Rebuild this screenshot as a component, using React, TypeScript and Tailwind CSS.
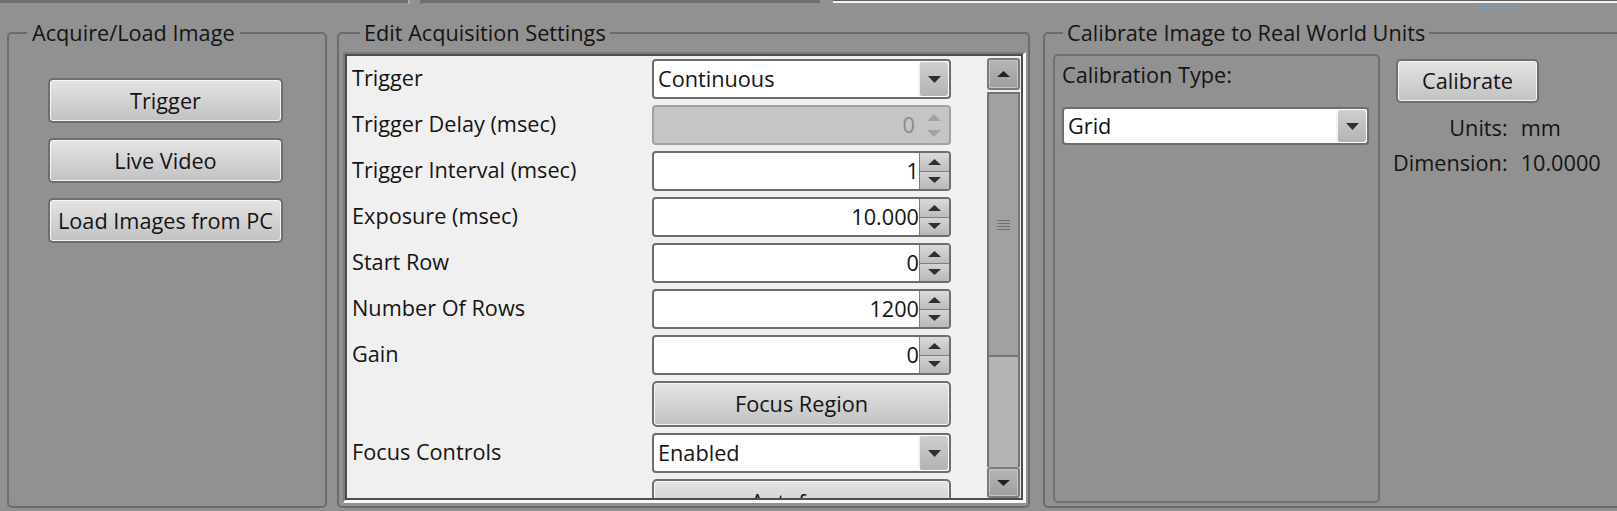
import React from "react";

/* Camera acquisition settings strip: three group boxes on a gray toolbar. */

type Dir = "up" | "down";

function Tri({ dir, color = "#2f2f36", w = 13, h = 7 }: { dir: Dir; color?: string; w?: number; h?: number }) {
  const d = dir === "up" ? `M0 ${h} L${w / 2} 0 L${w} ${h}Z` : `M0 0 L${w} 0 L${w / 2} ${h}Z`;
  return (
    <svg width={w} height={h} viewBox={`0 0 ${w} ${h}`} className="block">
      <path d={d} fill={color} />
    </svg>
  );
}

const btn =
  "flex items-center justify-center rounded-[5px] border-2 border-[#6e6e6e] bg-linear-to-b from-[#e4e4e4] to-[#c2c2c2] shadow-[inset_0_0_0_1px_#f6f6f6]";

function Dropdown({ value, className }: { value: string; className: string }) {
  return (
    <div className={`flex rounded-[4px] border-2 border-[#6d6d6d] bg-white overflow-hidden ${className}`}>
      <div className="flex flex-1 items-center pl-[4px]">{value}</div>
      <div className="m-[1px] flex w-[30px] items-center justify-center rounded-[3px] border-l-2 border-[#f2f2f2] bg-linear-to-b from-[#cfcfcf] to-[#b3b3b3]">
        <Tri dir="down" />
      </div>
    </div>
  );
}

function SpinBox({ value, disabled = false }: { value: string; disabled?: boolean }) {
  if (disabled) {
    return (
      <div className="flex h-[40px] w-[299px] rounded-[4px] border-2 border-[#a2a2a2] bg-[#c5c5c5]">
        <div className="flex flex-1 items-center justify-end pr-[4px] text-[#8a8a8a]">{value}</div>
        <div className="flex w-[30px] flex-col items-center justify-center gap-[9px]">
          <Tri dir="up" color="#a3a3a3" w={14} h={7} />
          <Tri dir="down" color="#a3a3a3" w={14} h={7} />
        </div>
      </div>
    );
  }
  return (
    <div className="flex h-[40px] w-[299px] rounded-[4px] border-2 border-[#6d6d6d] bg-white overflow-hidden">
      <div className="flex flex-1 items-center justify-end">{value}</div>
      <div className="flex w-[30px] flex-col border-l border-[#7d7d7d]">
        <div className="flex flex-1 items-center justify-center border-b border-[#7d7d7d] bg-linear-to-b from-[#dadada] to-[#bdbdbd]">
          <Tri dir="up" w={13} h={6} />
        </div>
        <div className="flex flex-1 items-center justify-center bg-linear-to-b from-[#d4d4d4] to-[#b8b8b8]">
          <Tri dir="down" w={13} h={6} />
        </div>
      </div>
    </div>
  );
}

function Row({ label, children, tall = false }: { label: string; children: React.ReactNode; tall?: boolean }) {
  return (
    <div className={`flex shrink-0 items-center ${tall ? "h-[46px]" : "h-[40px]"}`}>
      <div className="w-[300px] pb-[2px]">{label}</div>
      {children}
    </div>
  );
}

function Scrollbar() {
  return (
    <div className="flex w-[33px] flex-col pt-[2px]">
      <div className="flex h-[32px] items-center justify-center rounded-[3px] border-2 border-[#7b7b7b] bg-linear-to-b from-[#b6b6b6] to-[#9f9f9f] shadow-[inset_0_0_0_1px_#c4c4c4]">
        <Tri dir="up" color="#222228" w={13} h={6} />
      </div>
      <div className="mt-[2px] flex h-[265px] flex-col items-center justify-center gap-[2px] border-2 border-[#747474] bg-[#a1a1a1]">
        <div className="h-[1px] w-[13px] bg-[#6f6f6f]" />
        <div className="h-[1px] w-[13px] bg-[#6f6f6f]" />
        <div className="h-[1px] w-[13px] bg-[#6f6f6f]" />
        <div className="h-[1px] w-[13px] bg-[#6f6f6f]" />
      </div>
      <div className="flex-1 border-x-2 border-[#747474] bg-[#b4b4b4]" />
      <div className="flex h-[31px] items-center justify-center rounded-[3px] border-2 border-[#7b7b7b] bg-linear-to-b from-[#b6b6b6] to-[#9f9f9f] shadow-[inset_0_0_0_1px_#c4c4c4]">
        <Tri dir="down" color="#222228" w={13} h={6} />
      </div>
    </div>
  );
}

export default function App() {
  return (
    <div className="h-[511px] w-[1617px] overflow-hidden bg-[#919191] font-['Open_Sans',sans-serif] text-[21.7px] leading-[24px] text-[#141414]">
      {/* tab strip bottoms */}
      <div className="flex h-[9px]">
        <div className="h-[3px] w-[408px] bg-[#6f6f6f]" />
        <div className="h-[4px] w-[14px] border-l-2 border-r-2 border-l-[#ababab] border-r-[#727272]" />
        <div className="h-[3px] w-[398px] bg-[#6f6f6f]" />
        <div className="w-[13px]" />
        <div className="flex flex-1 flex-col">
          <div className="h-[1px] bg-[#5e5e5e]" />
          <div className="h-[2px] bg-[#f2f2f2]" />
          <div className="ml-[645px] mt-[4px] w-[42px] border-t-2 border-dotted border-[#4da6f5]" />
        </div>
      </div>

      <div className="flex items-start pl-[7px] pt-[12px]">
        {/* Acquire / Load */}
        <fieldset className="h-[487px] w-[320px] shrink-0 rounded-[5px] border-2 border-[#6c6c6c]">
          <legend className="ml-[18px] px-[5px]">Acquire/Load Image</legend>
          <div className="flex flex-col gap-[15px] pl-[39px] pt-[33px]">
            <div className={`${btn} h-[45px] w-[235px]`}>Trigger</div>
            <div className={`${btn} h-[45px] w-[235px]`}>Live Video</div>
            <div className={`${btn} h-[45px] w-[235px]`}>Load Images from PC</div>
          </div>
        </fieldset>

        {/* Edit Acquisition Settings */}
        <fieldset className="ml-[10px] h-[487px] w-[693px] shrink-0 rounded-[5px] border-2 border-[#6c6c6c]">
          <legend className="ml-[21px] px-[4px]">Edit Acquisition Settings</legend>
          <div className="pl-[4px] pt-[7px]">
            <div className="h-[451px] w-[683px] border-b-[3px] border-l-2 border-r-[3px] border-t-2 border-b-[#f7f7f7] border-l-[#7b7b7b] border-r-[#f7f7f7] border-t-[#7b7b7b]">
              <div className="flex h-full border-2 border-[#4d4d4d] bg-[#f0f0f0]">
                <div className="flex w-[640px] flex-col gap-[6px] overflow-hidden pl-[5px] pt-[3px]">
                  <Row label="Trigger">
                    <Dropdown value="Continuous" className="h-[40px] w-[299px]" />
                  </Row>
                  <Row label="Trigger Delay (msec)">
                    <SpinBox value="0" disabled />
                  </Row>
                  <Row label="Trigger Interval (msec)">
                    <SpinBox value="1" />
                  </Row>
                  <Row label="Exposure (msec)">
                    <SpinBox value="10.000" />
                  </Row>
                  <Row label="Start Row">
                    <SpinBox value="0" />
                  </Row>
                  <Row label="Number Of Rows">
                    <SpinBox value="1200" />
                  </Row>
                  <Row label="Gain">
                    <SpinBox value="0" />
                  </Row>
                  <Row label="" tall>
                    <div className={`${btn} h-[46px] w-[299px]`}>Focus Region</div>
                  </Row>
                  <Row label="Focus Controls">
                    <Dropdown value="Enabled" className="h-[40px] w-[299px]" />
                  </Row>
                  <Row label="" tall>
                    <div className={`${btn} h-[46px] w-[299px]`}>Autofocus</div>
                  </Row>
                </div>
                <Scrollbar />
              </div>
            </div>
          </div>
        </fieldset>

        {/* Calibrate */}
        <fieldset className="ml-[13px] h-[487px] w-[640px] shrink-0 rounded-[5px] border-2 border-[#6c6c6c]">
          <legend className="ml-[18px] px-[4px]">Calibrate Image to Real World Units</legend>
          <div className="flex items-start pl-[8px] pt-[9px]">
            <div className="h-[449px] w-[327px] shrink-0 rounded-[5px] border-2 border-[#707070] pl-[7px] pt-[7px]">
              <div>Calibration Type:</div>
              <Dropdown value="Grid" className="mt-[20px] h-[38px] w-[307px]" />
            </div>
            <div className="flex flex-col pt-[5px]">
              <div className={`${btn} ml-[16px] h-[44px] w-[143px]`}>Calibrate</div>
              <div className="ml-[13px] mt-[13px] grid grid-cols-[auto_auto] justify-start gap-x-[13px] gap-y-[11px]">
                <div className="text-right">Units:</div>
                <div>mm</div>
                <div className="text-right">Dimension:</div>
                <div>10.0000</div>
              </div>
            </div>
          </div>
        </fieldset>
      </div>
    </div>
  );
}
